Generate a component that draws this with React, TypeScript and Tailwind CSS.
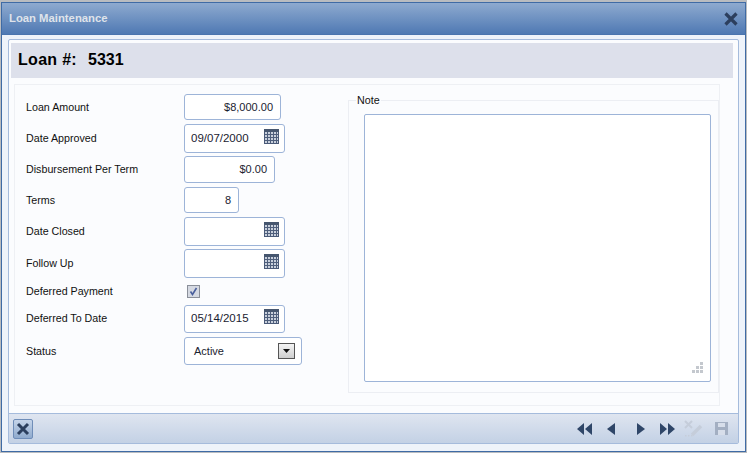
import { ReactNode } from 'react';

const CalendarIcon = () => (
  <svg width="15" height="15" viewBox="0 0 15 15" className="shrink-0">
    <rect x="0.5" y="0.5" width="14" height="14" fill="#c9d0dc" stroke="#4a5a78" />
    <rect x="0" y="0" width="15" height="3" fill="#46566f" />
    <path d="M1 5.5H14M1 8.5H14M1 11.5H14M3.5 3V14M6.5 3V14M9.5 3V14M12.5 3V14" stroke="#4f5f7c" strokeWidth="1" />
  </svg>
);

const Row = ({ label, className, up, children }: { label: string; className: string; up?: boolean; children: ReactNode }) => (
  <div className={`flex items-center ${className}`}>
    <div className={`w-[158px] shrink-0 text-[#111] ${up ? 'pb-[1px]' : 'pt-[1px]'}`}>{label}</div>
    {children}
  </div>
);

const boxClass = 'h-full bg-white border border-[#9db4d8] rounded-[3px] flex items-center text-[#1a2230]';

const DateBox = ({ value }: { value?: string }) => (
  <div className={`${boxClass} w-[101px] pl-[6px] pr-[5px] justify-between text-[11.5px]`}>
    <span>{value}</span>
    <div className="mb-[5px] ml-auto"><CalendarIcon /></div>
  </div>
);

const NumBox = ({ value, className }: { value: string; className: string }) => (
  <div className={`${boxClass} ${className} justify-end pr-[7px] text-[11px]`}>{value}</div>
);

const NavButton = ({ d, w }: { d: string; w: number }) => (
  <svg width={w} height="14" viewBox={`0 0 ${w} 14`}>
    <path d={d} fill="#2f4668" />
  </svg>
);

export default function App() {
  return (
    <div className="w-[747px] h-[453px] overflow-hidden bg-[#b9bcc0] pt-[2px] pl-[1px] pr-[1px] pb-[1px] text-[10.7px]" style={{ fontFamily: '"Liberation Sans", Arial, sans-serif' }}>
      <div className="h-full border border-[#3f6ba5] bg-[#eef3fa] flex flex-col">
        {/* title */}
        <div className="h-[32px] shrink-0 bg-gradient-to-b from-[#8eaacf] to-[#4f79b3] flex items-center justify-between pl-[7px] pr-[6px] border-b border-[#4a74ae]">
          <span className="text-[#dfe3ea] font-bold text-[11.3px]">Loan Maintenance</span>
          <svg width="16" height="16" viewBox="0 0 16 16">
            <path d="M2.5 2.5L13.5 13.5M13.5 2.5L2.5 13.5" stroke="#2c3f5e" strokeWidth="3.2" />
          </svg>
        </div>

        <div className="flex-1 flex flex-col mx-[6px] mt-[4px] mb-[7px] border border-[#a5bbdc] rounded-[2px] bg-[#fbfcfe] min-h-0">
          <div className="h-[35px] shrink-0 ml-[2px] mt-[3px] mr-[5px] bg-[#dde0eb] flex items-center pl-[7px] pb-[1px] text-[16px] font-bold text-black">
            <span className="w-[70px] tracking-[0.3px]">Loan #:</span>
            <span>5331</span>
          </div>

          {/* body */}
          <div className="flex-1 ml-[5px] mt-[6px] mb-[7px] mr-[18px] border border-[#eef0f4] flex">
            <div className="w-[333px] shrink-0 pl-[11px] pt-[9px] flex flex-col">
              <Row label="Loan Amount" className="h-[26px]"><NumBox value="$8,000.00" className="w-[97px]" /></Row>
              <Row label="Date Approved" up className="h-[29px] mt-[4px]"><DateBox value="09/07/2000" /></Row>
              <Row label="Disbursement Per Term" up className="h-[27px] mt-[3px]"><NumBox value="$0.00" className="w-[91px]" /></Row>
              <Row label="Terms" className="h-[26px] mt-[4px]"><NumBox value="8" className="w-[55px]" /></Row>
              <Row label="Date Closed" up className="h-[29px] mt-[4px]"><DateBox /></Row>
              <Row label="Follow Up" up className="h-[29px] mt-[3px]"><DateBox /></Row>
              <Row label="Deferred Payment" className="h-[14px] mt-[6px]">
                <div className="ml-[3px] w-[13px] h-[13px] border border-[#8a8f99] bg-[#d5d9e2] flex items-center justify-center">
                  <svg width="9" height="9" viewBox="0 0 9 9">
                    <path d="M1.5 4.5L3.5 7.5L7.5 1" stroke="#4a5f9c" strokeWidth="1.6" fill="none" />
                  </svg>
                </div>
              </Row>
              <Row label="Deferred To Date" up className="h-[28px] mt-[7px]"><DateBox value="05/14/2015" /></Row>
              <Row label="Status" className="h-[28px] mt-[4px]">
                <div className={`${boxClass} w-[118px] pl-[9px] pr-[6px] justify-between text-[11px]`}>
                  <span>Active</span>
                  <div className="w-[17px] h-[16px] border border-[#555] bg-gradient-to-b from-[#f4f4f4] to-[#cfcfcf] flex items-center justify-center">
                    <svg width="7" height="4" viewBox="0 0 7 4"><path d="M0 0H7L3.5 4Z" fill="#111" /></svg>
                  </div>
                </div>
              </Row>
            </div>

            <div className="relative w-[373px] h-[293px] mt-[15px] border border-[#eceef3] pt-[13px] pl-[15px]">
              <span className="absolute left-[7px] top-[-9px] bg-[#fbfcfe] px-[1px] text-[#111]">Note</span>
              <div className="relative w-[347px] h-[268px] bg-white border border-[#9db4d8] rounded-[2px]">
                <svg className="absolute right-[6px] bottom-[7px]" width="12" height="12" viewBox="0 0 12 12">
                  <path d="M8 0h3v3H8zM4 4h3v3H4zM8 4h3v3H8zM0 8h3v3H0zM4 8h3v3H4zM8 8h3v3H8z" fill="#c4c8ce" />
                </svg>
              </div>
            </div>
          </div>

          {/* footer */}
          <div className="h-[30px] shrink-0 border-t border-[#a5bbdc] bg-gradient-to-b from-[#dfe5f0] to-[#c3d1e5] flex items-center justify-between pl-[4px] pr-[10px]">
            <div className="w-[20px] h-[20px] border border-[#6f8db8] rounded-[2px] bg-gradient-to-b from-[#c6d5ea] to-[#8faacd] flex items-center justify-center">
              <svg width="14" height="14" viewBox="0 0 14 14">
                <path d="M2 2L12 12M12 2L2 12" stroke="#2c3f5e" strokeWidth="3" />
              </svg>
            </div>
            <div className="flex items-center">
              <NavButton w={15} d="M0 7L7 1V13ZM8 7L15 1V13Z" />
              <div className="ml-[15px]"><NavButton w={8} d="M0 7L8 1V13Z" /></div>
              <div className="ml-[22px]"><NavButton w={8} d="M0 1L8 7L0 13Z" /></div>
              <div className="ml-[15px]"><NavButton w={15} d="M0 1L7 7L0 13ZM8 1L15 7L8 13Z" /></div>
              <svg className="ml-[9px]" width="19" height="18" viewBox="0 0 19 18">
                <path d="M1 1L8 8M8 1L1 8" stroke="#c5cdda" strokeWidth="2" />
                <path d="M8 15L17 6" stroke="#c5cdda" strokeWidth="3.5" />
                <path d="M1 15h1.5v1.5H1zM4 15h1.5v1.5H4zM7 15h1.5v1.5H7z" fill="#c5cdda" />
              </svg>
              <svg className="ml-[12px]" width="13" height="13" viewBox="0 0 13 13">
                <path d="M0 0H13V13H0Z" fill="#a3afc2" />
                <rect x="3" y="1" width="7" height="4" fill="#d7deea" />
                <rect x="3" y="8" width="7" height="5" fill="#d7deea" />
              </svg>
            </div>
          </div>
        </div>
      </div>
    </div>
  );
}
